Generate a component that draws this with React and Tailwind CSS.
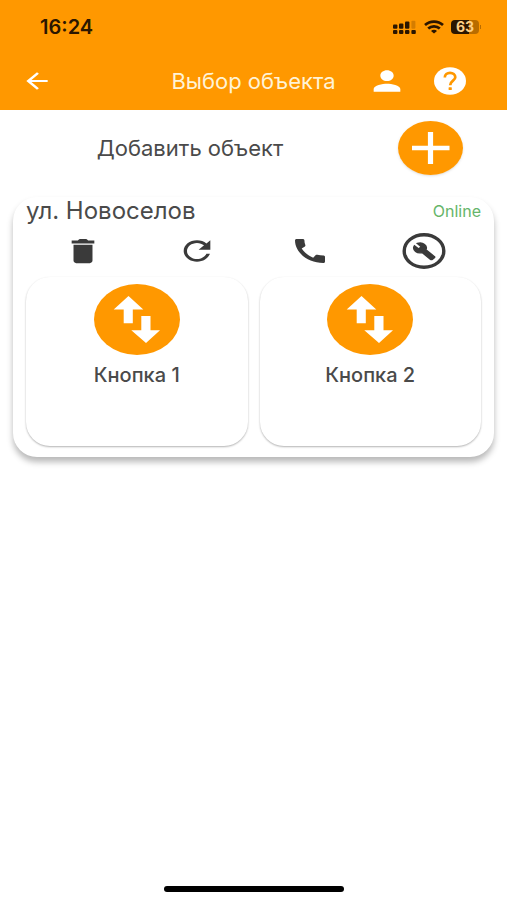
const paths = {
  back: 'M20 11H7.83l5.59-5.59L12 4l-8 8 8 8 1.41-1.41L7.83 13H20v-2z',
  person: 'M12 12c2.21 0 4-1.79 4-4s-1.79-4-4-4-4 1.79-4 4 1.79 4 4 4zm0 2c-2.67 0-8 1.34-8 4v2h16v-2c0-2.66-5.33-4-8-4z',
  trash: 'M5.3 19.2c0 1.1.8 1.9 1.9 1.9h9.6c1.1 0 1.9-.8 1.9-1.9V7.4H5.3v11.8zM20 4.2h-4.4c-.3-.8-1-1.2-2-1.2h-3.2c-1 0-1.7.4-2 1.2H4v2.2h16V4.2z',
  refresh: 'M17.65 6.35C16.2 4.9 14.21 4 12 4c-4.42 0-7.99 3.58-7.99 8s3.57 8 7.99 8c3.73 0 6.84-2.55 7.73-6h-2.08c-.82 2.33-3.04 4-5.65 4-3.31 0-6-2.69-6-6s2.69-6 6-6c1.66 0 3.14.69 4.22 1.78L13 11h7V4l-2.35 2.35z',
  phone: 'M20.01 15.38c-1.23 0-2.42-.2-3.53-.56-.35-.12-.74-.03-1.01.24l-1.57 1.97c-2.83-1.35-5.48-3.9-6.89-6.83l1.95-1.66c.27-.28.35-.67.24-1.02-.37-1.11-.56-2.3-.56-3.53 0-.54-.45-.99-.99-.99H4.19C3.65 3 3 3.24 3 3.99 3 13.28 10.73 21 20.01 21c.71 0 .99-.63.99-1.18v-3.45c0-.54-.45-.99-.99-.99z',
  wrench: 'M22.7 19l-9.1-9.1c.9-2.3.4-5-1.5-6.9-2-2-5-2.4-7.4-1.3L9 6 6 9 1.6 4.7C.4 7.1.9 10.1 2.9 12.1c1.9 1.9 4.6 2.4 6.9 1.5l9.1 9.1c.4.4 1 .4 1.4 0l2.3-2.3c.5-.4.5-1.1.1-1.4z',
}

const actions = [
  { id: 'trash', label: 'Удалить', size: 'w-[34px] h-8' },
  { id: 'refresh', label: 'Обновить', size: 'w-10 h-8' },
  { id: 'phone', label: 'Позвонить', size: 'w-10 h-8' },
  { id: 'service', label: 'Настройки', size: 'w-11 h-9' },
]

const buttons = [
  { id: 1, name: 'Кнопка 1' },
  { id: 2, name: 'Кнопка 2' },
]

function Icon({ name, className }) {
  return (
    <svg className={className} viewBox="0 0 24 24" preserveAspectRatio="none" fill="currentColor" aria-hidden="true">
      <path d={paths[name]} />
    </svg>
  )
}

function HelpIcon({ className }) {
  return (
    <svg className={className} viewBox="0 0 32 28" aria-hidden="true">
      <ellipse cx="16" cy="14" rx="16" ry="13.8" fill="currentColor" />
      <path d="M10.8 10.4C10.8 7.6 13.2 5.8 16 5.8C19 5.8 21.3 7.6 21.3 10.2C21.3 13.6 16.2 13.8 16.2 18.2" fill="none" stroke="#ff9800" strokeWidth="2.7" />
      <rect x="14.6" y="20.2" width="3.2" height="2.8" rx="0.6" fill="#ff9800" />
    </svg>
  )
}

function ServiceIcon({ className }) {
  return (
    <svg className={className} viewBox="0 0 44 36" preserveAspectRatio="none" aria-hidden="true">
      <ellipse cx="22" cy="18" rx="19.8" ry="16.2" fill="none" stroke="currentColor" strokeWidth="3.4" />
      <path transform="translate(11 9.2) scale(0.94 0.76)" d={paths.wrench} fill="currentColor" stroke="currentColor" strokeWidth="1.8" />
    </svg>
  )
}

function ArrowsIcon() {
  return (
    <svg className="w-[86px] h-[71px]" viewBox="0 0 86 71" aria-hidden="true">
      <ellipse cx="43" cy="35.5" rx="43" ry="35.5" fill="#ff9800" />
      <path d="M34.5 12L49.3 25.4H38.8V39.3H29.7V25.4H19.7Z" fill="#fff" />
      <path d="M47.3 32H56.5V46.3H66L52 59L37.3 46.3H47.3Z" fill="#fff" />
    </svg>
  )
}

function StatusBar() {
  return (
    <div className="h-[54px] pl-10 pr-[26px] flex items-center justify-between text-[#2b1600]">
      <span className="text-xl leading-6 font-semibold">16:24</span>
      <div className="flex items-center gap-[7px]">
        <svg className="w-6 h-[14px]" viewBox="0 0 24 14" fill="currentColor" aria-hidden="true">
          <rect x="0" y="4.4" width="4.4" height="4.4" rx="1" />
          <rect x="6" y="3.4" width="4.4" height="5.4" rx="1" />
          <rect x="12" y="1.6" width="4.4" height="7.2" rx="1" />
          <rect x="18.4" y="0.8" width="4" height="8" rx="1" opacity="0.2" />
          <rect x="0" y="10" width="4.4" height="4" rx="1" />
          <rect x="6" y="10" width="4.4" height="4" rx="1" />
          <rect x="12" y="10" width="4.4" height="4" rx="1" />
          <rect x="18.4" y="10" width="4.4" height="4" rx="1" />
        </svg>
        <svg className="w-5 h-[14px]" viewBox="0 0 20 14" fill="none" stroke="currentColor" strokeWidth="2.7" aria-hidden="true">
          <path d="M1 5C6 0.4 14 0.4 19 5" />
          <path d="M4.2 8.6C7.4 5.6 12.6 5.6 15.8 8.6" />
          <path d="M7 11C8.6 9.4 11.4 9.4 13 11L10 13.6Z" fill="currentColor" stroke="none" />
        </svg>
        <div className="flex items-center gap-px">
          <span className="w-7 h-[14px] rounded-sm bg-linear-to-r from-[#2b1600] from-65% to-[#b86c00] to-65% text-[#ffcf85] text-sm leading-[14px] font-bold text-center">63</span>
          <span className="w-px h-1 bg-[#b86c00]" />
        </div>
      </div>
    </div>
  )
}

export default function App() {
  return (
    <div className="min-h-screen flex flex-col bg-white text-[#4a4a4a] font-['Inter','Liberation_Sans',sans-serif]">
      <header className="bg-[#ff9800] text-white">
        <StatusBar />
        <div className="h-14 px-[21px] pb-[2px] grid grid-cols-[1fr_auto_1fr] items-center">
          <button aria-label="Назад" className="justify-self-start">
            <Icon name="back" className="w-8 h-[26px]" />
          </button>
          <h1 className="text-[22px] leading-7 text-[#fff3d6]">Выбор объекта</h1>
          <div className="pr-5 flex items-center justify-end gap-[27px]">
            <button aria-label="Профиль"><Icon name="person" className="w-10 h-8" /></button>
            <button aria-label="Помощь"><HelpIcon className="w-8 h-7" /></button>
          </div>
        </div>
      </header>

      <main className="flex-1">
        <div className="pt-[11px] pb-[22px] pr-11 flex items-center gap-[18px]">
          <p className="flex-1 text-center text-[22px] leading-7">Добавить объект</p>
          <button aria-label="Добавить" className="rounded-[50%] shadow-sm">
            <svg className="w-[65px] h-[54px]" viewBox="0 0 65 54" aria-hidden="true">
              <ellipse cx="32.5" cy="27" rx="32.5" ry="27" fill="#ff9800" />
              <path d="M14 27H51.5" stroke="#fff" strokeWidth="4.4" />
              <path d="M32.5 11V43" stroke="#fff" strokeWidth="5.2" />
            </svg>
          </button>
        </div>

        <section className="mx-[13px] px-[13px] pb-[11px] rounded-3xl bg-white shadow-[0_5px_6px_rgba(0,0,0,0.28)]">
          <div className="h-7 flex items-center justify-between">
            <h2 className="text-2xl leading-7">ул. Новоселов</h2>
            <span className="text-base leading-6 text-[#66b56a]">Online</span>
          </div>
          <div className="h-[52px] grid grid-cols-4 items-center justify-items-center text-[#3a3a3a]">
            {actions.map((action) => (
              <button key={action.id} aria-label={action.label}>
                {action.id === 'service'
                  ? <ServiceIcon className={action.size} />
                  : <Icon name={action.id} className={action.size} />}
              </button>
            ))}
          </div>
          <div className="grid grid-cols-2 gap-3">
            {buttons.map((button) => (
              <button
                key={button.id}
                className="min-h-[169px] pt-[7px] flex flex-col items-center gap-2 rounded-3xl bg-white shadow-[0_1px_2px_rgba(0,0,0,0.3)]"
              >
                <ArrowsIcon />
                <span className="text-xl leading-6 font-medium">{button.name}</span>
              </button>
            ))}
          </div>
        </section>
      </main>

      <footer className="pb-2 flex justify-center">
        <div className="w-[180px] h-[6px] rounded-full bg-black" />
      </footer>
    </div>
  )
}
